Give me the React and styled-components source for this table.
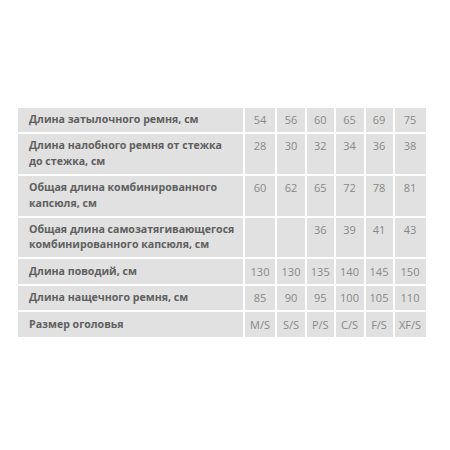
import styled, { createGlobalStyle } from "styled-components";

const GlobalStyle = createGlobalStyle`
  html, body {
    margin: 0;
    padding: 0;
    background: #ffffff;
  }
  body {
    font-family: "Open Sans", "Liberation Sans", Arial, sans-serif;
  }
`;

const Page = styled.div`
  width: 450px;
  height: 450px;
  padding: 105.5px 0 0 15.5px;
  box-sizing: border-box;
`;

const Table = styled.table`
  border-collapse: separate;
  border-spacing: 2.5px;
  font-size: 10.6px;
  line-height: 15.4px;
`;

const Label = styled.td`
  width: 208px;
  background: #e1e1e1;
  color: #5f5f5f;
  font-weight: 700;
  padding: 4.5px 6px 4.5px 11.5px;
  vertical-align: top;
`;

const Value = styled.td`
  background: #e1e1e1;
  color: #888888;
  font-weight: 400;
  font-size: 11px;
  text-align: center;
  vertical-align: top;
  padding: 4.5px 0;
  width: ${(p) => p.$w}px;
`;

const widths = [30, 28, 26.5, 28, 27, 31];

const rows = [
  ["Длина затылочного ремня, см", ["54", "56", "60", "65", "69", "75"]],
  ["Длина налобного ремня от стежка до стежка, см", ["28", "30", "32", "34", "36", "38"]],
  ["Общая длина комбинированного капсюля, см", ["60", "62", "65", "72", "78", "81"]],
  ["Общая длина самозатягивающегося комбинированного капсюля, см", ["", "", "36", "39", "41", "43"]],
  ["Длина поводий, см", ["130", "130", "135", "140", "145", "150"]],
  ["Длина нащечного ремня, см", ["85", "90", "95", "100", "105", "110"]],
  ["Размер оголовья", ["M/S", "S/S", "P/S", "C/S", "F/S", "XF/S"]],
];

const App = () => {
  return (
    <Page>
      <GlobalStyle />
      <Table>
        <tbody>
          {rows.map(([label, values]) => (
            <tr key={label}>
              <Label>{label}</Label>
              {values.map((v, i) => (
                <Value key={i} $w={widths[i]}>
                  {v}
                </Value>
              ))}
            </tr>
          ))}
        </tbody>
      </Table>
    </Page>
  );
};

export default App;
